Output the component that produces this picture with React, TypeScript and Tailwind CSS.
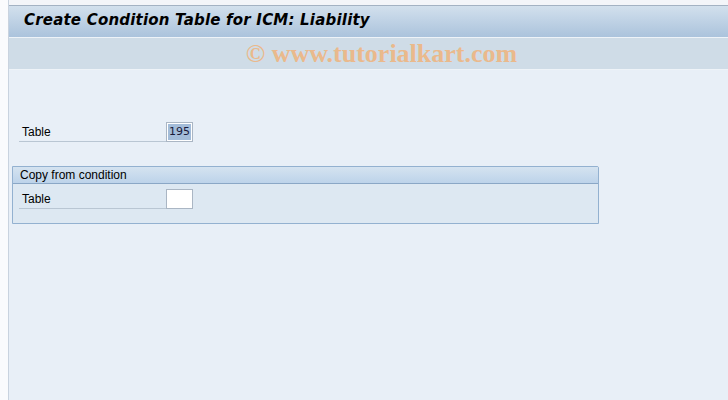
export default function App() {
  return (
    <div className="w-[728px] h-[400px] flex bg-[#f3f5f9] overflow-hidden" style={{ fontFamily: "Tahoma, 'DejaVu Sans', sans-serif" }}>
      <div className="w-[9px] bg-[#fafbfd] border-r border-[#c9d3df]" />
      <div className="flex-1 flex flex-col pt-[5px]">
        <div className="h-[32px] bg-gradient-to-b from-[#d2e0ed] to-[#abc3dc] border-t border-[#a3b2c3] flex items-center pl-[15px] pb-[2px]">
          <h1 className="text-[15px] font-bold italic text-black tracking-[0.2px]">Create Condition Table for ICM: Liability</h1>
        </div>
        <div className="h-[33px] bg-[#cfdce7] border-t border-[#eef3f8] border-b border-[#a7b4c4] flex items-center justify-center">
          <span className="text-[26px] font-bold text-[#eab98c] pl-[26px] leading-none" style={{ fontFamily: "'Liberation Serif', serif" }}>© www.tutorialkart.com</span>
        </div>
        <div className="flex-1 bg-[#e8eff7] pt-[52px] pl-[3px] text-[12px] text-black" style={{ fontFamily: "'Liberation Sans', sans-serif" }}>
          <div className="flex items-end h-[20px] ml-[7px]">
            <div className="w-[147px] h-[20px] border-b border-[#b9c6d3] pl-[3px] flex items-center">Table</div>
            <div className="w-[27px] h-[20px] border border-[#aab6c4] bg-white flex items-center justify-center">
              <span className="bg-[#a3bcd9] px-[1px] text-[#1a1a3a]" style={{ fontFamily: "'DejaVu Sans', sans-serif", fontSize: "11px" }}>195</span>
            </div>
          </div>
          <div className="mt-[24px] w-[587px] border border-[#93b1d0] rounded-tr-[2px] bg-[#dde8f2] h-[58px]">
            <div className="h-[17px] bg-gradient-to-b from-[#d5e3f0] to-[#bdd3ea] border-b border-[#8aa7c6] pl-[7px] flex items-center">Copy from condition</div>
            <div className="flex items-end h-[21px] mt-[4px] pl-[6px]">
              <div className="w-[147px] h-[20px] border-b border-[#b9c6d3] pl-[3px] flex items-center">Table</div>
              <div className="w-[27px] h-[20px] border border-[#aab6c4] bg-white" />
            </div>
          </div>
        </div>
      </div>
    </div>
  );
}
